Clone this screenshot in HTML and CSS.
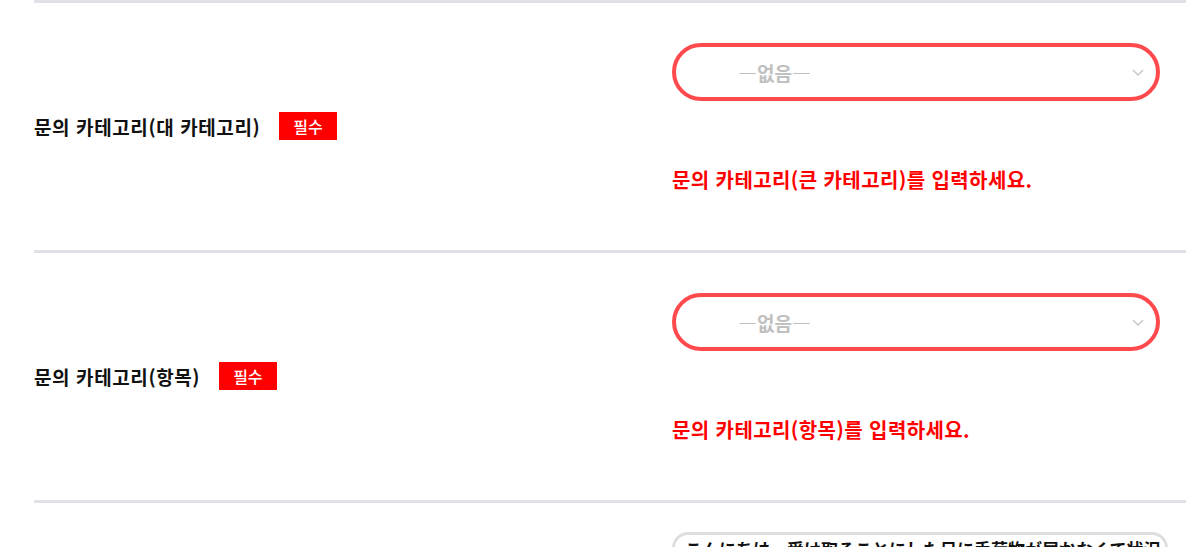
FILE: index.html
```html
<!DOCTYPE html>
<html lang="ko">
<head>
    <meta charset="UTF-8">
    <meta name="viewport" content="width=device-width, initial-scale=1.0">
    <title>문의하기</title>
    <link rel="stylesheet" href="styles.css">
</head>
<body>
    <div class="form">
        <div class="row">
            <div class="label">
                <span>문의 카테고리(대 카테고리)</span>
                <span class="required">필수</span>
            </div>
            <div class="field">
                <div class="select">
                    <span class="placeholder">―없음―</span>
                    <svg class="chevron" width="12" height="7" viewBox="0 0 12 7"><path d="M1 1l5 5 5-5" fill="none" stroke="#c8c8c8" stroke-width="1.5"/></svg>
                </div>
                <p class="error">문의 카테고리(큰 카테고리)를 입력하세요.</p>
            </div>
        </div>
        <div class="row">
            <div class="label">
                <span>문의 카테고리(항목)</span>
                <span class="required">필수</span>
            </div>
            <div class="field">
                <div class="select">
                    <span class="placeholder">―없음―</span>
                    <svg class="chevron" width="12" height="7" viewBox="0 0 12 7"><path d="M1 1l5 5 5-5" fill="none" stroke="#c8c8c8" stroke-width="1.5"/></svg>
                </div>
                <p class="error">문의 카테고리(항목)를 입력하세요.</p>
            </div>
        </div>
        <div class="row last">
            <div class="label"></div>
            <div class="field">
                <div class="textbox">こんにちは、受け取ることにした日に手荷物が届かなくて状況</div>
            </div>
        </div>
    </div>
</body>
</html>
```

FILE: styles.css
```css
body {
    margin: 0;
    padding: 0;
    background: #fff;
    color: #111;
    font-family: "Noto Sans CJK KR", "Noto Sans", sans-serif;
    overflow: hidden;
}
.form {
    margin-left: 34px;
}
.row {
    display: flex;
    align-items: center;
    border-top: 3px solid #e0e0e6;
    padding: 40px 0 57px;
}
.label {
    width: 638px;
    display: flex;
    align-items: center;
    font-size: 19px;
    letter-spacing: 0.6px;
    font-weight: bold;
    position: relative;
    top: 8px;
}
.required {
    display: inline-block;
    margin-left: 19px;
    background: #ff0000;
    color: #fff;
    font-size: 16px;
    letter-spacing: 0;
    font-weight: 500;
    height: 28px;
    line-height: 28px;
    padding: 0 14px;
}
.field {
    width: 488px;
}
.select {
    height: 50px;
    border: 4px solid #ff4a4d;
    border-radius: 30px;
    display: flex;
    align-items: center;
    justify-content: space-between;
    padding: 0 12px 0 62px;
}
.placeholder {
    color: #c0c0c0;
    font-family: "Noto Sans CJK KR", sans-serif;
    font-size: 19px;
    font-weight: bold;
}
.error {
    margin: 66px 0 0;
    color: #ff0000;
    font-size: 20px;
    letter-spacing: 0.4px;
    font-weight: bold;
    line-height: 26px;
}
.row.last {
    padding-top: 29px;
    align-items: flex-start;
}
.textbox {
    width: 470px;
    border: 3px solid #dedede;
    border-radius: 16px;
    padding: 1px 10px;
    font-family: "Noto Sans CJK JP", sans-serif;
    font-size: 17px;
    font-weight: bold;
    color: #111;
    white-space: nowrap;
    overflow: hidden;
    height: 60px;
}
```
